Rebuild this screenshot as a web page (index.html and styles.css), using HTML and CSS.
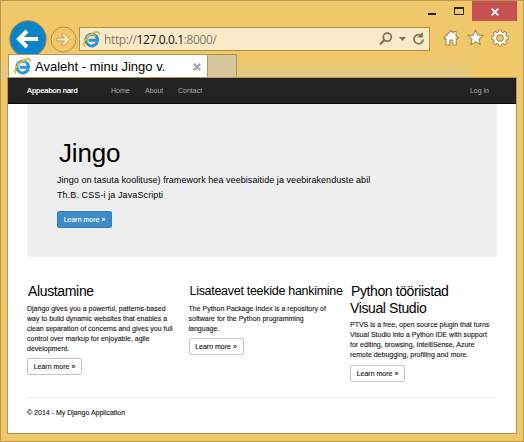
FILE: index.html
```html
<!DOCTYPE html>
<html lang="et">
<head>
<meta charset="utf-8">
<title>Avaleht</title>
<link rel="stylesheet" href="styles.css">
</head>
<body>
<svg class="defs" width="0" height="0" aria-hidden="true">
  <symbol id="ie" viewBox="0 0 16 16">
    <path d="M13.4 10.3A5.5 5.5 0 1 1 13.7 8.7H5.2" fill="none" stroke="#2d94cf" stroke-width="2.8"/>
    <path d="M3.2 6.5A5.2 5.2 0 0 1 12 5" fill="none" stroke="#72c8ee" stroke-width="1.2"/>
    <path d="M2.2 14.6C-1.2 13.2 2.4 7 7 3.5C11.3.2 15.8-.4 15 3.5" fill="none" stroke="#efb321" stroke-width="1.5"/>
  </symbol>
</svg>
<div class="window">
  <div class="titlebar">
    <svg class="win-min" width="9" height="20" viewBox="0 0 9 20"><path d="M0 12h8v2H0z" fill="#222"/></svg>
    <svg class="win-max" width="10" height="20" viewBox="0 0 10 20"><path d="M.5 7v6.500h9V7" fill="none" stroke="#222"/><path d="M0 6h10v2H0z" fill="#222"/></svg>
    <div class="close"><svg width="8" height="8" viewBox="0 0 8 8"><path d="M.7.7l6.600 6.600M7.300.7L.7 7.300" stroke="#fff" stroke-width="1.700"/></svg></div>
  </div>
  <div class="toolbar">
    <svg class="back" width="38" height="38" viewBox="0 0 38 38"><circle cx="19" cy="19" r="18.200" fill="#0a84c8" stroke="#a58443"/><path d="M29 19H11M18 11l-8 8 8 8" fill="none" stroke="#fff" stroke-width="4"/></svg>
    <svg class="forward" width="27" height="27" viewBox="0 0 27 27"><circle cx="13.500" cy="13.500" r="12.500" fill="none" stroke="#b69045"/><path d="M7 12h7.500l-3.500-4h3.500l5.500 5.500-5.500 5.500H11l3.500-4H7z" fill="#fbe9bd" stroke="#b69045" stroke-width=".8"/></svg>
    <div class="address">
      <svg class="fav" width="17" height="17"><use href="#ie"/></svg>
      <span class="url">http://<b>127.0.0.1</b>:8000/</span>
      <svg class="tools" width="46" height="16" viewBox="0 0 46 16"><g fill="none" stroke="#7d7055" stroke-width="1.700"><circle cx="8.300" cy="6.200" r="4"/><path d="M5.400 9L1 13.500" stroke-width="2.300"/><path d="M42.800 4.800A4.600 4.600 0 1 0 44.200 8.500"/></g><path d="M20 6h7l-3.500 4zM43.800 1v5.500h-5.500z" fill="#7d7055"/></svg>
    </div>
    <svg class="actions" width="66" height="18" viewBox="0 0 66 18"><g fill="#fff" stroke="#a78b55" stroke-width="1.100" stroke-linejoin="round"><path d="M.8 9L8 1.500l2.500 2.500V2.500h2.500V6.500L15.500 9l-1 1.200-1.300-1V16H9.800v-5H6.800v5H3V9.200l-1.200 1z"/><path d="M32.500.8l2.100 5.300 5.700.3-4.400 3.700 1.500 5.700-4.900-3.100-4.900 3.100 1.500-5.700-4.400-3.700 5.700-.3z"/><path fill-rule="evenodd" d="M55.600 1h2.800l.4 2 1.300.6 1.800-1.300 2 2-1.200 1.800.5 1.200 2.200.4v2.600l-2.200.4-.5 1.200 1.200 1.800-2 2-1.800-1.200-1.300.5-.4 2h-2.800l-.4-2-1.300-.5-1.800 1.200-2-2 1.200-1.800-.5-1.200-2.200-.4V7.700l2.200-.4.5-1.200-1.200-1.800 2-2 1.800 1.300 1.300-.6zM57 5.700a3.300 3.300 0 1 0 0 6.600 3.300 3.300 0 0 0 0-6.600z"/></g></svg>
  </div>
  <div class="tabs">
    <div class="tab"><svg width="17" height="17"><use href="#ie"/></svg><span>Avaleht - minu Jingo v.</span><svg class="tab-x" width="8" height="8" viewBox="0 0 8 8"><path d="M.7.7l6.600 6.600M7.300.7L.7 7.300" stroke="#a3a3a3" stroke-width="2"/></svg></div>
    <div class="newtab"></div>
  </div>
  <div class="page">
    <nav class="navbar"><span class="brand">Appeabon nard</span><span class="home">Home</span><span class="about">About</span><span class="contact">Contact</span><span class="login">Log in</span></nav>
    <main>
      <section class="jumbotron">
        <h1>Jingo</h1>
        <p><span class="lead-a">Jingo on tasuta koolituse) framework hea veebisaitide ja veebirakenduste abil</span><br><span class="lead-b">Th.B. CSS-i ja JavaScripti</span></p>
        <span class="btn primary">Learn more »</span>
      </section>
      <section class="columns">
        <article class="one"><h2>Alustamine</h2><p>Django gives you a powerful, patterns-based<br>way to build dynamic websites that enables a<br>clean separation of concerns and gives you full<br>control over markup for enjoyable, agile<br>development.</p><span class="btn">Learn more »</span></article>
        <article class="two"><h2>Lisateavet teekide hankimine</h2><p>The Python Package Index is a repository of<br>software for the Python programming<br>language.</p><span class="btn">Learn more »</span></article>
        <article class="three"><h2>Python tööriistad<br><span>Visual Studio</span></h2><p>PTVS is a free, open source plugin that turns<br>Visual Studio into a Python IDE with support<br>for editing, browsing, IntelliSense, Azure<br>remote debugging, profiling and more.</p><span class="btn">Learn more »</span></article>
      </section>
      <footer>© 2014 - My Django Application</footer>
    </main>
  </div>
</div>
</body>
</html>
```
FILE: styles.css
```css
* { box-sizing: border-box; }
body { margin: 0; font-family: "Liberation Sans", Arial, sans-serif; }
h1, h2, p { margin: 0; font-weight: 400; }
svg { display: block; flex: none; }
.defs { position: absolute; }
.window { width: 524px; height: 442px; border: 1px solid #b8984f; background: #f0c869; overflow: hidden; white-space: nowrap; }
.titlebar { height: 20px; display: flex; justify-content: flex-end; padding-right: 6px; }
.win-min { margin-right: 17px; }
.win-max { margin-right: 8px; }
.close { width: 45px; height: 20px; background: #c75050; display: flex; align-items: center; justify-content: center; padding-top: 1px; }
.toolbar { height: 33px; display: flex; align-items: flex-start; padding-left: 8px; }
.back { margin-top: -1px; }
.forward { margin: 5px 0 0 3px; }
.address { width: 351px; height: 24px; margin: 6px 0 0 2px; border: 1px solid #b18f47; background: #faeac8; display: flex; align-items: center; padding: 0 4px 0 3px; }
.url { font-family: "Open Sans", sans-serif; font-size: 12px; color: #82786a; margin-left: 4px; letter-spacing: -.38px; }
.url b { color: #111; font-weight: 400; }
.tools { margin-left: auto; }
.actions { margin: 8px 0 0 13px; }
.tabs { height: 24px; display: flex; padding-left: 7px; position: relative; background: linear-gradient(to right, transparent 237px, #f0c86900 237px 455px, #f0c869 485px), linear-gradient(#f0c869 4px, #dfc88f 24px); }
.tab { width: 200px; background: #fff; border: 1px solid #b8984f; border-width: 1px 1px 0; display: flex; align-items: center; padding-left: 5px; font-size: 13px; }
.tab span { margin-left: 4px; }
.tab-x { margin: 0 6px 0 auto; }
.newtab { width: 29px; background: #d6c69e; border: 1px solid #b18f47; border-width: 1px 1px 0 0; }
.page { width: 510px; height: 357px; margin: -1px 0 0 6px; border: 1px solid #b8984f; background: #fff; position: relative; }
.navbar { height: 26px; background: #222; border-bottom: 1px solid #080808; display: flex; align-items: center; padding: 0 27px 0 19px; font-size: 7px; color: #aaa; }
.brand { color: #fff; width: 84px; font-size: 7.500px; -webkit-text-stroke: .2px; letter-spacing: -.05px; }
.home { width: 34px; }
.about { width: 33px; }
.login { margin-left: auto; }
main { padding: 0 19px; }
.jumbotron { height: 153px; background: #eee; border-radius: 0 0 4px 4px; padding: 33px 30px 0; }
h1 { font-size: 26px; line-height: 32px; margin-left: 2px; letter-spacing: -.2px; }
.jumbotron p { font-size: 9px; line-height: 15px; margin: 4px 0 8px; }
.lead-a { letter-spacing: .06px; }
.lead-b { letter-spacing: .1px; }
.btn { display: flex; align-items: center; justify-content: center; width: 55px; height: 17px; border: 1px solid #c4c4c4; border-radius: 2px; font-size: 7px; color: #111; background: #fff; -webkit-text-stroke: .1px; }
.btn.primary { background: #428bca; border-color: #357ebd; color: #fff; }
.columns { display: grid; grid-template-columns: 161.500px 161.500px 1fr; height: 140px; padding-top: 26px; }
h2 { font-size: 14px; line-height: 17px; letter-spacing: -.35px; padding-left: 1px; }
.three h2 span { margin-left: -1px; }
.columns p { font-size: 7px; line-height: 10px; color: #111; margin: 4px 0; -webkit-text-stroke: .1px; }
.two h2 { font-size: 12.500px; letter-spacing: -.29px; }
.three h2 { letter-spacing: -.4px; }
.columns .three p { margin: 3px 0 5px; }
footer { border-top: 1px solid #eee; padding-top: 10px; font-size: 7px; line-height: 10px; color: #111; -webkit-text-stroke: .1px; }
```
